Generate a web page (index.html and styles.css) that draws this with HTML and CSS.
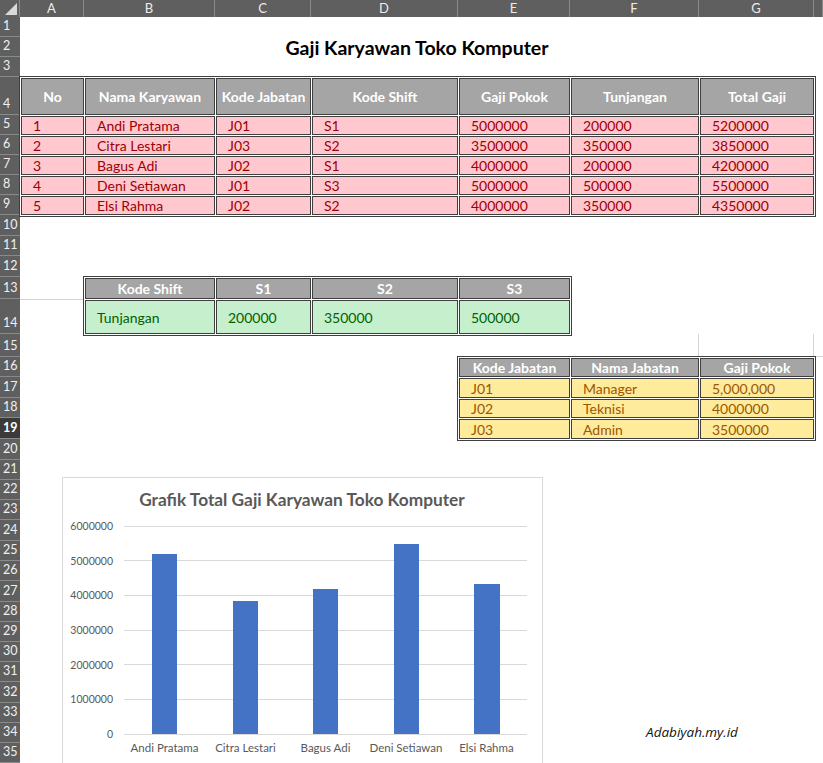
FILE: index.html
```html
<!DOCTYPE html>
<html lang="id">
<head>
<meta charset="utf-8">
<title>Gaji Karyawan Toko Komputer</title>
<link rel="stylesheet" href="styles.css">
</head>
<body>
<div class="sheet">
  <div class="corner"><svg width="20" height="17" viewBox="0 0 20 17"><polygon points="5,15 17,15 17,3" fill="#d9d9d9"/></svg></div>
  <div class="ch">A</div><div class="ch">B</div><div class="ch">C</div><div class="ch">D</div><div class="ch">E</div><div class="ch">F</div><div class="ch">G</div><div class="ch"></div>

  <div class="rh">1</div><div class="rh">2</div><div class="rh">3</div><div class="rh">4</div><div class="rh">5</div>
  <div class="rh">6</div><div class="rh">7</div><div class="rh">8</div><div class="rh">9</div><div class="rh">10</div>
  <div class="rh">11</div><div class="rh">12</div><div class="rh">13</div><div class="rh">14</div><div class="rh">15</div>
  <div class="rh">16</div><div class="rh">17</div><div class="rh">18</div><div class="rh active">19</div><div class="rh">20</div>
  <div class="rh">21</div><div class="rh">22</div><div class="rh">23</div><div class="rh">24</div><div class="rh">25</div>
  <div class="rh">26</div><div class="rh">27</div><div class="rh">28</div><div class="rh">29</div><div class="rh">30</div>
  <div class="rh">31</div><div class="rh">32</div><div class="rh">33</div><div class="rh">34</div><div class="rh">35</div>

  <div class="title">Gaji Karyawan Toko Komputer</div>

  <div class="tbl tbl-main">
    <div class="c h">No</div><div class="c h">Nama Karyawan</div><div class="c h">Kode Jabatan</div><div class="c h">Kode Shift</div><div class="c h">Gaji Pokok</div><div class="c h">Tunjangan</div><div class="c h">Total Gaji</div>
    <div class="c bad">1</div><div class="c bad">Andi Pratama</div><div class="c bad">J01</div><div class="c bad">S1</div><div class="c bad">5000000</div><div class="c bad">200000</div><div class="c bad">5200000</div>
    <div class="c bad">2</div><div class="c bad">Citra Lestari</div><div class="c bad">J03</div><div class="c bad">S2</div><div class="c bad">3500000</div><div class="c bad">350000</div><div class="c bad">3850000</div>
    <div class="c bad">3</div><div class="c bad">Bagus Adi</div><div class="c bad">J02</div><div class="c bad">S1</div><div class="c bad">4000000</div><div class="c bad">200000</div><div class="c bad">4200000</div>
    <div class="c bad">4</div><div class="c bad">Deni Setiawan</div><div class="c bad">J01</div><div class="c bad">S3</div><div class="c bad">5000000</div><div class="c bad">500000</div><div class="c bad">5500000</div>
    <div class="c bad">5</div><div class="c bad">Elsi Rahma</div><div class="c bad">J02</div><div class="c bad">S2</div><div class="c bad">4000000</div><div class="c bad">350000</div><div class="c bad">4350000</div>
  </div>

  <div class="gl-row14"></div>

  <div class="tbl tbl-shift">
    <div class="c h">Kode Shift</div><div class="c h">S1</div><div class="c h">S2</div><div class="c h">S3</div>
    <div class="c good">Tunjangan</div><div class="c good">200000</div><div class="c good">350000</div><div class="c good">500000</div>
  </div>

  <div class="gl-f15"></div>
  <div class="gl-g15"></div>

  <div class="tbl tbl-jab">
    <div class="c h">Kode Jabatan</div><div class="c h">Nama Jabatan</div><div class="c h">Gaji Pokok</div>
    <div class="c neutral">J01</div><div class="c neutral">Manager</div><div class="c neutral">5,000,000</div>
    <div class="c neutral">J02</div><div class="c neutral">Teknisi</div><div class="c neutral">4000000</div>
    <div class="c neutral">J03</div><div class="c neutral">Admin</div><div class="c neutral">3500000</div>
  </div>

  <div class="mark">Adabiyah.my.id</div>

  <div class="chart">
    <svg width="479" height="298" viewBox="0 0 479 298">
      <text class="ct" x="239" y="28" text-anchor="middle">Grafik Total Gaji Karyawan Toko Komputer</text>
      <g class="grid">
        <line x1="61" x2="464" y1="48.5" y2="48.5"/>
        <line x1="61" x2="464" y1="82.5" y2="82.5"/>
        <line x1="61" x2="464" y1="117.5" y2="117.5"/>
        <line x1="61" x2="464" y1="152.5" y2="152.5"/>
        <line x1="61" x2="464" y1="186.5" y2="186.5"/>
        <line x1="61" x2="464" y1="221.5" y2="221.5"/>
        <line x1="61" x2="464" y1="256.5" y2="256.5"/>
      </g>
      <g class="yl">
        <text x="50" y="52">6000000</text>
        <text x="50" y="87">5000000</text>
        <text x="50" y="121">4000000</text>
        <text x="50" y="156">3000000</text>
        <text x="50" y="191">2000000</text>
        <text x="50" y="225">1000000</text>
        <text x="50" y="260">0</text>
      </g>
      <g class="bars">
        <rect x="89" y="76" width="25" height="180"/>
        <rect x="170" y="123" width="25" height="133"/>
        <rect x="250" y="111" width="25" height="145"/>
        <rect x="331" y="66" width="25" height="190"/>
        <rect x="411" y="106" width="26" height="150"/>
      </g>
      <g class="xl">
        <text x="101.5" y="274">Andi Pratama</text>
        <text x="182.5" y="274">Citra Lestari</text>
        <text x="262.5" y="274">Bagus Adi</text>
        <text x="343" y="274">Deni Setiawan</text>
        <text x="423.5" y="274">Elsi Rahma</text>
      </g>
    </svg>
  </div>
</div>
</body>
</html>
```
FILE: styles.css
```css
html, body {
  margin: 0;
  padding: 0;
  background: #ffffff;
}
body {
  width: 823px;
  height: 763px;
  overflow: hidden;
  font-family: Lato, "Open Sans", sans-serif;
}
.sheet {
  position: relative;
  display: grid;
  grid-template-columns: 20px 64px 131px 96px 147px 112px 129px 115px 9px;
  grid-template-rows: 17px 20px 20px 20px 38px 20px 20px 20px 20px 20px 21px 20px 21px 22px 35px 23px 20px 21px 20px 21px 21px 20px 20px 20px 21px 20px 20px 21px 20px 20px 20px 20px 21px 20px 20px 20px;
  width: 823px;
  height: 763px;
  overflow: hidden;
  background: #ffffff;
}
.corner {
  grid-row: 1;
  grid-column: 1;
  background: #5f5f5f;
  border-right: 1px solid #8a8a8a;
  box-sizing: border-box;
}
.corner svg { display: block; }
.ch {
  grid-row: 1;
  background: #5f5f5f;
  color: #ececec;
  font-size: 13px;
  line-height: 17px;
  text-align: center;
  border-right: 1px solid #8a8a8a;
  box-sizing: border-box;
}
.rh {
  grid-column: 1;
  background: #5f5f5f;
  color: #f0f0f0;
  font-size: 12.5px;
  line-height: 20px;
  padding-left: 3px;
  border-bottom: 1px solid #8a8a8a;
  box-sizing: border-box;
  display: flex;
  align-items: flex-end;
  overflow: hidden;
}
.rh.active {
  background: #3a3a3a;
  color: #ffffff;
  font-weight: 700;
}
.title {
  grid-row: 3;
  grid-column: 2 / 9;
  display: flex;
  align-items: center;
  justify-content: center;
  font-weight: 700;
  font-size: 19.5px;
  color: #000;
}
.tbl {
  display: grid;
  align-self: start;
  justify-self: start;
  margin: -1px 0 0 -1px;
  border: 1px solid #3f3f3f;
  padding: 1px;
  gap: 1px;
  background: #ffffff;
  position: relative;
  z-index: 1;
}
.tbl-main {
  grid-column: 2 / 9;
  grid-row: 5 / 11;
  grid-template-columns: 63px 130px 95px 146px 111px 128px 114px;
  grid-template-rows: 37px repeat(5, 19px);
}
.tbl-shift {
  grid-column: 3 / 7;
  grid-row: 14 / 16;
  grid-template-columns: 130px 95px 146px 111px;
  grid-template-rows: 21px 34px;
}
.tbl-jab {
  grid-column: 6 / 9;
  grid-row: 17 / 21;
  grid-template-columns: 111px 128px 114px;
  grid-template-rows: 19px 20px 19px 20px;
}
.c {
  box-sizing: border-box;
  border: 1px solid #3f3f3f;
  display: flex;
  align-items: center;
  padding-left: 11px;
  font-size: 14px;
  white-space: nowrap;
  overflow: hidden;
}
.h {
  background: #a5a5a5;
  color: #ffffff;
  font-weight: 700;
  justify-content: center;
  padding-left: 0;
}
.bad { background: #ffc7ce; color: #9c0006; }
.good { background: #c6efce; color: #006100; }
.neutral { background: #ffeb9c; color: #9c5700; }
.gl-row14 {
  grid-column: 2;
  grid-row: 15;
  border-top: 1px solid #d4d4d4;
}
.gl-f15 {
  grid-column: 7;
  grid-row: 16;
  border-right: 1px solid #d4d4d4;
}
.gl-g15 {
  grid-column: 8 / 10;
  grid-row: 16;
  border-bottom: 1px solid #d4d4d4;
  margin-left: 114px;
  border-left: 1px solid #d4d4d4;
}
.mark {
  grid-column: 7 / 9;
  grid-row: 35;
  display: flex;
  align-items: center;
  justify-content: center;
  font-family: "Open Sans", sans-serif;
  font-style: italic;
  font-size: 13.5px;
  color: #111;
  margin-top: -3px;
}
.chart {
  position: absolute;
  left: 62px;
  top: 477px;
  width: 481px;
  height: 300px;
  border: 1px solid #d9d9d9;
  background: #ffffff;
  box-sizing: border-box;
}
.chart svg { display: block; }
.ct {
  font-family: Lato, sans-serif;
  font-weight: 700;
  font-size: 17.3px;
  fill: #595959;
}
.grid line { stroke: #d9d9d9; stroke-width: 1; }
.yl text {
  font-family: Lato, sans-serif;
  font-size: 10.5px;
  fill: #595959;
  text-anchor: end;
}
.xl text {
  font-family: Lato, sans-serif;
  font-size: 11.5px;
  fill: #595959;
  text-anchor: middle;
}
.bars rect { fill: #4472c4; }
```
